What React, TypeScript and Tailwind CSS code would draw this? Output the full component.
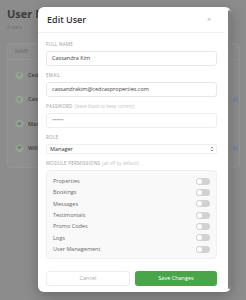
const permissions = [
  "Properties",
  "Bookings",
  "Messages",
  "Testimonials",
  "Promo Codes",
  "Logs",
  "User Management",
];

const users = [
  { initial: "C", name: "Cedric Admin", badge: false },
  { initial: "C", name: "Cassandra Kim", badge: true },
  { initial: "M", name: "Maria Lopez", badge: false },
  { initial: "W", name: "William Chen", badge: true },
];

function Field({ label, hint, children }: { label: string; hint?: string; children: React.ReactNode }) {
  return (
    <div className="flex flex-col">
      <div className="h-[6px] leading-[6px] text-[4.5px] uppercase tracking-[0.3px] text-[#9a9a9a] mb-[4px]">
        {label}
        {hint && <span className="normal-case tracking-normal text-[#c4c4c4] ml-[2px]">{hint}</span>}
      </div>
      {children}
    </div>
  );
}

function Toggle() {
  return (
    <div className="w-[14px] h-[7px] rounded-full bg-[#d2d2d2] flex items-center px-[1px]">
      <div className="w-[5px] h-[5px] rounded-full bg-white" />
    </div>
  );
}

export default function App() {
  return (
    <div
      className="relative w-[246px] h-[300px] overflow-hidden bg-[#8c8c8c]"
      style={{ fontFamily: '"Open Sans", "Liberation Sans", sans-serif' }}
    >
      {/* Page behind the overlay (the modal covers most of it) */}
      <div className="px-[7px] pt-[6px]">
        <h1 className="text-[11px] leading-[16px] font-bold text-[#3c3c3c] whitespace-nowrap">User Management</h1>
        <p className="text-[4.5px] leading-[6px] text-[#707070] mt-[2px]">4 users</p>

        <div className="mt-[13px] w-[233px] rounded-[4px] border border-[#959595] bg-[#8f8f8f]">
          <div className="h-[16px] flex items-center px-[7px] border-b border-[#959595] text-[4.5px] text-[#6a6a6a] uppercase">
            Name
          </div>
          <div className="flex flex-col pt-[3px] pb-[6px]">
            {users.map((u, i) => (
              <div key={i} className="h-[24.4px] flex items-center px-[7px]">
                <div className="w-[9px] h-[9px] rounded-full bg-[#96a596] border border-[#8a9a8a] flex items-center justify-center text-[4px] font-bold text-[#5f6f5f]">
                  {u.initial}
                </div>
                <span className="ml-[4px] text-[5.5px] font-semibold text-[#3f3f3f] whitespace-nowrap">{u.name}</span>
                <div className="flex-1" />
                {u.badge && <div className="w-[5px] h-[5px] rounded-full bg-[#7c86a0] mr-[-6px]" />}
              </div>
            ))}
          </div>
        </div>
      </div>

      {/* Modal */}
      <div className="absolute left-[38px] top-[7px] w-[193px] h-[285px] rounded-[6px] bg-white shadow-[0_4px_14px_rgba(0,0,0,0.25)] flex overflow-hidden">
        <div className="w-[187px] flex flex-col">
          <div className="h-[26px] flex items-center justify-between pl-[9px] pr-[14px] border-b border-[#f0f0f0]">
            <span className="text-[9px] font-semibold text-[#333333]">Edit User</span>
            <span className="text-[7px] text-[#b0b0b0] leading-none">×</span>
          </div>

          <div className="px-[8px] pt-[8px] flex flex-col gap-[6px]">
            <Field label="Full Name">
              <div className="h-[15px] rounded-[3px] border border-[#e8e8e8] flex items-center px-[5px] text-[5.5px] text-[#444444]">
                Cassandra Kim
              </div>
            </Field>
            <Field label="Email">
              <div className="h-[15px] rounded-[3px] border border-[#e8e8e8] flex items-center px-[5px] text-[5.5px] text-[#444444]">
                cassandrakim@cedcasproperties.com
              </div>
            </Field>
            <Field label="Password" hint="(leave blank to keep current)">
              <div className="h-[15px] rounded-[3px] border border-[#eeeeee] flex items-center px-[5px] text-[5px] text-[#9a9a9a] tracking-[-0.5px]">
                ••••••••
              </div>
            </Field>
            <Field label="Role">
              <div className="h-[10px] rounded-[2px] border border-[#eeeeee] flex items-center justify-between pl-[3px] pr-[2px] text-[5.5px] text-[#333333]">
                <span>Manager</span>
                <svg width="4" height="6" viewBox="0 0 4 6" fill="none" stroke="#666" strokeWidth="0.7">
                  <path d="M0.8 2.2 L2 1 L3.2 2.2" />
                  <path d="M0.8 3.8 L2 5 L3.2 3.8" />
                </svg>
              </div>
            </Field>
            <Field label="Module Permissions" hint="(all off by default)">
              <div className="rounded-[4px] border border-[#f0f0f0] bg-[#f9f9f9] pt-[4.5px] pb-[3px] px-[6px] flex flex-col">
                {permissions.map((p) => (
                  <div key={p} className="h-[11.33px] flex items-center justify-between">
                    <span className="text-[5.5px] text-[#6a6a6a]">{p}</span>
                    <Toggle />
                  </div>
                ))}
              </div>
            </Field>
          </div>

          <div className="px-[8px] pt-[12px] flex gap-[5px]">
            <button className="flex-1 h-[15px] rounded-[3px] border border-[#ececec] bg-white text-[5.5px] text-[#aaaaaa]">
              Cancel
            </button>
            <button className="flex-1 h-[15px] rounded-[3px] bg-[#4aa54a] text-[5.5px] text-white">
              Save Changes
            </button>
          </div>
        </div>
        <div className="w-[6px] flex justify-end py-[3px]">
          <div className="w-[3px] h-full rounded-full bg-[#7f7f7f]" />
        </div>
      </div>
    </div>
  );
}
